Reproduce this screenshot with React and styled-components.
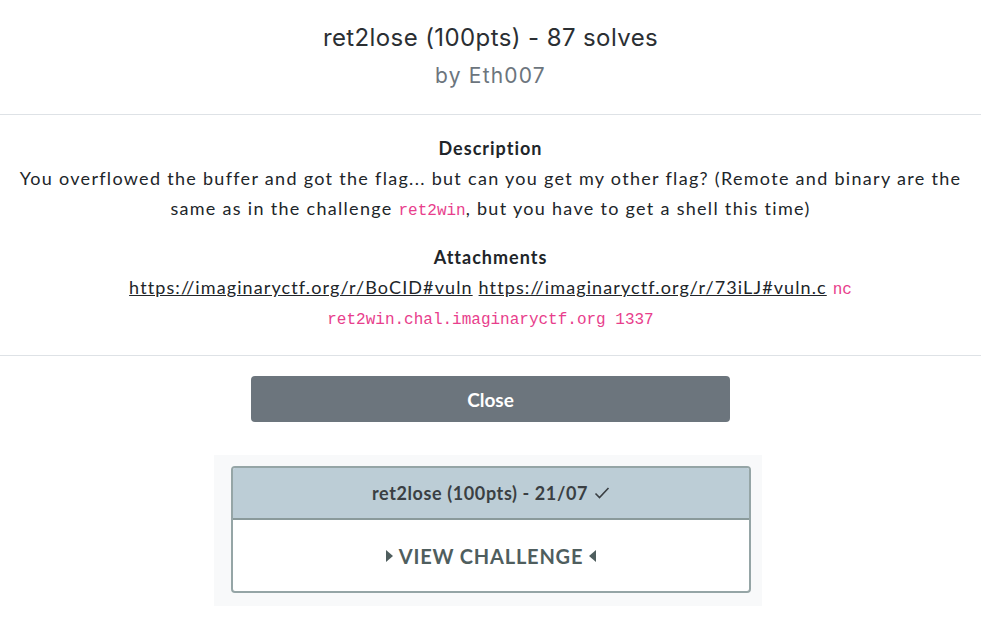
import React from "react";
import styled, { createGlobalStyle } from "styled-components";

const GlobalStyle = createGlobalStyle`
  html, body {
    margin: 0;
    padding: 0;
    background: #ffffff;
  }
  body {
    font-family: "Lato", "Liberation Sans", sans-serif;
    color: #212529;
  }
  * {
    box-sizing: border-box;
  }
`;

const Modal = styled.div`
  width: 981px;
  background: #ffffff;
`;

const Header = styled.div`
  padding: 20px 16px 23px;
  text-align: center;
  border-bottom: 1px solid #dee2e6;
`;

const Title = styled.h4`
  margin: 0;
  font-family: "Inter", "Liberation Sans", sans-serif;
  font-weight: 400;
  font-size: 24px;
  letter-spacing: 0.4px;
  line-height: 36px;
  color: #2b2f33;
`;

const Author = styled.div`
  margin-top: 5px;
  font-family: "Inter", "Liberation Sans", sans-serif;
  font-size: 21px;
  letter-spacing: 1.2px;
  line-height: 30px;
  color: #6c757d;
`;

const Body = styled.div`
  padding: 18px 16px 23px;
  text-align: center;
  font-size: 18px;
  line-height: 30px;
  letter-spacing: 1.3px;
`;

const Heading = styled.div`
  font-weight: 700;
  font-size: 18px;
  line-height: 30px;
  letter-spacing: 1px;
  margin-top: ${(p) => (p.$gap ? "19px" : "0")};
`;

const Text = styled.p`
  margin: 0;
`;

const Link = styled.a`
  color: #212529;
  text-decoration: underline;
  letter-spacing: 1.1px;
`;

const Code = styled.code`
  font-family: "Liberation Mono", "DejaVu Sans Mono", monospace;
  font-size: 16px;
  line-height: 1;
  letter-spacing: 0;
  color: #e83e8c;
`;

const Footer = styled.div`
  border-top: 1px solid #dee2e6;
  padding-top: 20px;
  display: flex;
  justify-content: center;
`;

const CloseButton = styled.button`
  width: 479px;
  height: 46px;
  border: none;
  border-radius: 4px;
  background: #6c757d;
  color: #ffffff;
  font-family: "Lato", "Liberation Sans", sans-serif;
  font-size: 19px;
  font-weight: 700;
  cursor: pointer;
`;

const CardArea = styled.div`
  margin: 33px 0 0 214px;
  width: 548px;
  padding: 11px 11px 13px 17px;
  background: #f8f9fa;
`;

const Card = styled.div`
  width: 520px;
  border: 2px solid #95a5a6;
  border-radius: 4px;
  overflow: hidden;
  background: #ffffff;
`;

const CardHeader = styled.div`
  height: 52px;
  background: #bccdd6;
  border-bottom: 2px solid #8a9a9b;
  display: flex;
  align-items: center;
  justify-content: center;
  gap: 6px;
  font-size: 18px;
  font-weight: 700;
  letter-spacing: 0.6px;
  color: #3a3f43;
`;

const CardBody = styled.div`
  height: 71px;
  display: flex;
  align-items: center;
  justify-content: center;
  gap: 6px;
  font-size: 20px;
  font-weight: 700;
  letter-spacing: 0.8px;
  color: #4f5e5e;
`;

const Caret = ({ dir }) => (
  <svg width="7" height="12" viewBox="0 0 7 12">
    {dir === "right" ? (
      <path d="M0 0 L7 6 L0 12 Z" fill="#4f5e5e" />
    ) : (
      <path d="M7 0 L0 6 L7 12 Z" fill="#4f5e5e" />
    )}
  </svg>
);

const Check = () => (
  <svg width="16" height="14" viewBox="0 0 16 14">
    <path
      d="M1.5 7.5 L5.5 11.5 L14.5 2"
      fill="none"
      stroke="#3a3f43"
      strokeWidth="1.6"
    />
  </svg>
);

export default function App() {
  return (
    <>
      <GlobalStyle />
      <Modal>
        <Header>
          <Title>ret2lose (100pts) - 87 solves</Title>
          <Author>by Eth007</Author>
        </Header>
        <Body>
          <Heading>Description</Heading>
          <Text>
            You overflowed the buffer and got the flag... but can you get my
            other flag? (Remote and binary are the same as in the challenge{" "}
            <Code>ret2win</Code>, but you have to get a shell this time)
          </Text>
          <Heading $gap>Attachments</Heading>
          <Text>
            <Link href="#">https://imaginaryctf.org/r/BoCID#vuln</Link>{" "}
            <Link href="#">https://imaginaryctf.org/r/73iLJ#vuln.c</Link>{" "}
            <Code>nc ret2win.chal.imaginaryctf.org 1337</Code>
          </Text>
        </Body>
        <Footer>
          <CloseButton>Close</CloseButton>
        </Footer>
      </Modal>
      <CardArea>
        <Card>
          <CardHeader>
            ret2lose (100pts) - 21/07 <Check />
          </CardHeader>
          <CardBody>
            <Caret dir="right" />
            VIEW CHALLENGE
            <Caret dir="left" />
          </CardBody>
        </Card>
      </CardArea>
    </>
  );
}
